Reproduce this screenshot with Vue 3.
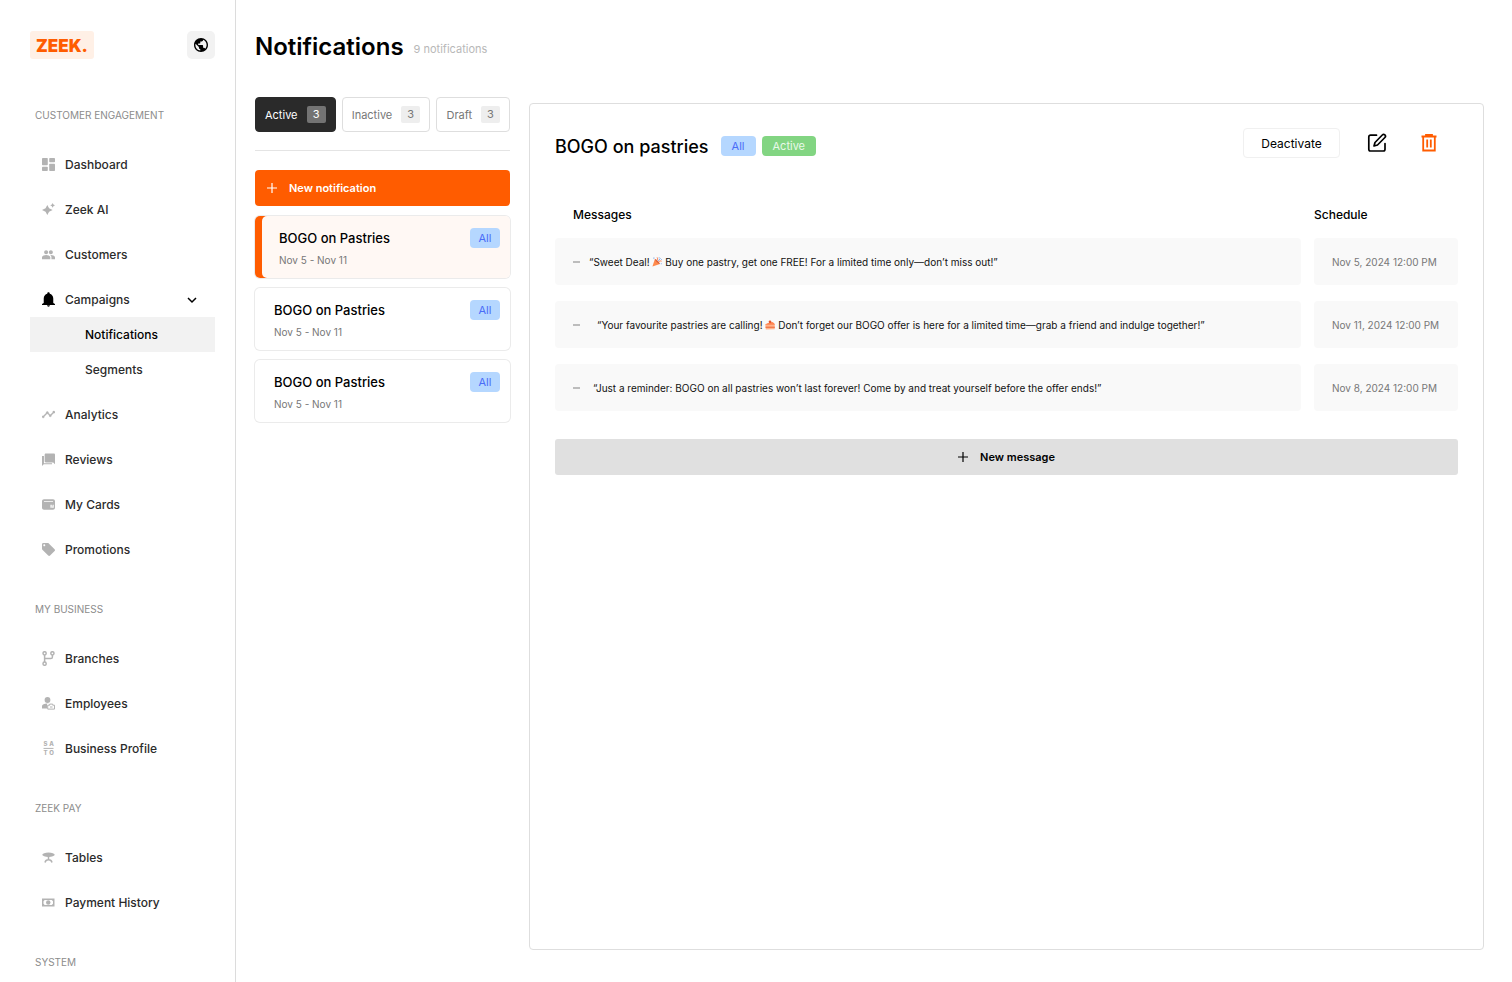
<script setup>
import { ref } from 'vue'

const icons = {
  dashboard: {
    box: '3 3 18 18',
    body: '<rect x="3" y="3" width="8" height="10" rx="1"/><rect x="13" y="3" width="8" height="6" rx="1"/><rect x="3" y="15" width="8" height="6" rx="1"/><rect x="13" y="11" width="8" height="10" rx="1"/>'
  },
  sparkle: {
    box: '1 1 22 22',
    body: '<path d="M10 4.500l3 5.500 6 3-6 3-3 5.500L7 16l-6-3 6-3z"/><path d="M19 1l1.300 2.700L23 5l-2.700 1.300L19 9l-1.300-2.700L15 5l2.700-1.300z"/>'
  },
  people: {
    box: '1 2 22 20',
    body: '<path d="M16 11.500c1.900 0 3.400-1.500 3.400-3.400S17.900 4.700 16 4.700s-3.400 1.500-3.400 3.400 1.500 3.400 3.400 3.400zm-8 0c1.900 0 3.400-1.500 3.400-3.400S9.900 4.700 8 4.700 4.600 6.200 4.600 8.100s1.500 3.400 3.400 3.400zm0 1.500c-2.330 0-7 1.170-7 3.500V20h14v-3.500c0-2.330-4.670-3.500-7-3.500zm8 0c-.29 0-.62.020-.97.050 1.160.84 1.970 1.970 1.970 3.450V20h6v-3.500c0-2.330-4.670-3.500-7-3.500z"/>'
  },
  bell: {
    box: '3 1 18 22',
    body: '<path d="M12 22.500c1.200 0 2.100-.8 2.100-1.900H9.900c0 1.100.9 1.900 2.100 1.900zM19 17v-6.500c0-3.500-2.200-6-5.200-6.800V3c0-1-.8-1.800-1.800-1.800S10.200 2 10.200 3v.7C7.200 4.500 5 7 5 10.500V17l-2.500 1.500V20h19v-1.500z"/>'
  },
  chart: {
    box: '1 2 22 20',
    body: '<path d="M23 8c0 1.100-.9 2-2 2-.18 0-.35-.020-.51-.07l-3.560 3.550c.050.16.070.34.070.52 0 1.100-.9 2-2 2s-2-.9-2-2c0-.18.020-.36.070-.52l-2.550-2.550c-.16.050-.34.070-.52.070s-.36-.020-.52-.07l-4.550 4.560c.050.16.070.33.070.51 0 1.100-.9 2-2 2s-2-.9-2-2 .9-2 2-2c.18 0 .35.020.51.070l4.560-4.550C8.020 9.360 8 9.180 8 9c0-1.100.9-2 2-2s2 .9 2 2c0 .18-.020.36-.07.520l2.550 2.550c.16-.050.34-.07.520-.07s.36.020.520.070l3.550-3.560C19.020 8.350 19 8.180 19 8c0-1.100.9-2 2-2s2 .9 2 2z" stroke="currentColor" stroke-width=".5"/>'
  },
  reviews: {
    box: '1 1 22 22',
    body: '<path d="M7.500 2H21c1.100 0 2 .9 2 2v16l-3-3H7.500c-1.100 0-2-.9-2-2V4c0-1.100.9-2 2-2z"/><path d="M1 6h3.300v12.200H18V20H4l-3 3z"/>'
  },
  card: {
    box: '2 3 20 18',
    body: '<path fill-rule="evenodd" d="M5 4h14c1.700 0 3 1.300 3 3v10c0 1.700-1.300 3-3 3H5c-1.700 0-3-1.300-3-3V7c0-1.700 1.300-3 3-3zm0 3v1.200h14V7zm10 5.500V17h2v-4.500zm3.500 0L17.500 17h2.500v-4.500z"/>'
  },
  tag: {
    box: '2 2 20 20',
    body: '<path d="M21.410 11.580l-9-9C12.050 2.220 11.550 2 11 2H4c-1.100 0-2 .9-2 2v7c0 .55.220 1.050.59 1.420l9 9c.36.36.86.58 1.410.58s1.050-.22 1.410-.59l7-7c.37-.36.59-.86.59-1.410s-.23-1.060-.59-1.420zM5.500 7C4.670 7 4 6.330 4 5.500S4.670 4 5.500 4 7 4.670 7 5.500 6.330 7 5.500 7z"/>'
  },
  branch: {
    box: '0 0 13 15',
    body: '<g fill="none" stroke="currentColor" stroke-width="1.500"><circle cx="2.600" cy="2.300" r="1.600"/><circle cx="10.400" cy="2.300" r="1.600"/><circle cx="2.600" cy="12.700" r="1.600"/><path d="M2.600 4v7M2.600 7.500h6.200c1 0 1.600-.6 1.600-1.600V4"/></g>'
  },
  employee: {
    box: '0 0 13 14',
    body: '<circle cx="5.500" cy="3.500" r="2.900"/><path d="M0 12V9.500C0 8 2.500 7 5 7c.8 0 1.500.1 2 .3H5v4.700z"/><path d="M5.700 8.700h2V7.600h3v1.100h1.800v3.900H5.700z" fill="none" stroke="currentColor" stroke-width="1"/><path d="M8 10.500h2.500" stroke="currentColor" stroke-width="1"/>'
  },
  profile: {
    box: '0 0 13 15',
    body: '<g font-family="Inter, sans-serif" font-size="6" font-weight="800" text-anchor="middle"><text x="3.500" y="5">S</text><text x="9.500" y="5">A</text><text x="3.500" y="14">T</text><text x="9.500" y="14">O</text></g><path d="M1.500 6.900h10v1h-10z"/>'
  },
  table: {
    box: '0 0 13 13',
    body: '<ellipse cx="6.500" cy="3.800" rx="6.200" ry="2.200"/><path d="M6.500 5v4M3 11.500c.5-2.100 1.800-2.700 3.500-2.700s3 .6 3.500 2.700" fill="none" stroke="currentColor" stroke-width="1.500"/>'
  },
  cash: {
    box: '0 0 13 13',
    body: '<path fill-rule="evenodd" d="M0 2.500h12.500v8H0zM2.700 4L1.500 5.200v2.600L2.700 9h7.100L11 7.800V5.200L9.800 4z"/><circle cx="6.250" cy="6.500" r="2.200"/>'
  }
}

const groups = [
  {
    title: 'CUSTOMER ENGAGEMENT',
    items: [
      { label: 'Dashboard', icon: 'dashboard' },
      { label: 'Zeek AI', icon: 'sparkle' },
      { label: 'Customers', icon: 'people' },
      { label: 'Campaigns', icon: 'bell', children: ['Notifications', 'Segments'] },
      { label: 'Analytics', icon: 'chart' },
      { label: 'Reviews', icon: 'reviews' },
      { label: 'My Cards', icon: 'card' },
      { label: 'Promotions', icon: 'tag' }
    ]
  },
  {
    title: 'MY BUSINESS',
    items: [
      { label: 'Branches', icon: 'branch' },
      { label: 'Employees', icon: 'employee' },
      { label: 'Business Profile', icon: 'profile' }
    ]
  },
  {
    title: 'ZEEK PAY',
    items: [
      { label: 'Tables', icon: 'table' },
      { label: 'Payment History', icon: 'cash' }
    ]
  },
  { title: 'SYSTEM', items: [] }
]

const tabs = [
  { label: 'Active', count: 3 },
  { label: 'Inactive', count: 3 },
  { label: 'Draft', count: 3 }
]
const activeTab = ref('Active')

const notifications = [
  { id: 1, name: 'BOGO on Pastries', dates: 'Nov 5 - Nov 11', audience: 'All' },
  { id: 2, name: 'BOGO on Pastries', dates: 'Nov 5 - Nov 11', audience: 'All' },
  { id: 3, name: 'BOGO on Pastries', dates: 'Nov 5 - Nov 11', audience: 'All' }
]
const selected = ref(1)

const messages = [
  {
    before: '“Sweet Deal! ',
    emoji: 'party',
    after: ' Buy one pastry, get one FREE! For a limited time only—don’t miss out!”',
    indent: 'none',
    schedule: 'Nov 5, 2024 12:00 PM'
  },
  {
    before: '“Your favourite pastries are calling! ',
    emoji: 'cake',
    after: ' Don’t forget our BOGO offer is here for a limited time—grab a friend and indulge together!”',
    indent: 'double',
    schedule: 'Nov 11, 2024 12:00 PM'
  },
  {
    before: '“Just a reminder: BOGO on all pastries won’t last forever! Come by and treat yourself before the offer ends!”',
    indent: 'single',
    schedule: 'Nov 8, 2024 12:00 PM'
  }
]
</script>

<template>
  <div class="page">
    <aside class="sidebar">
      <div class="brand">
        <a href="#" class="logo">ZEEK.</a>
        <button class="globe" aria-label="Language">
          <svg viewBox="2 2 20 20"><path d="M12 2C6.480 2 2 6.480 2 12s4.480 10 10 10 10-4.480 10-10S17.520 2 12 2zm-1 17.930c-3.950-.49-7-3.850-7-7.930 0-.62.080-1.210.21-1.790L9 15v1c0 1.100.9 2 2 2v1.930zm6.900-2.540c-.26-.81-1-1.390-1.900-1.390h-1v-3c0-.55-.45-1-1-1H8v-2h2c.55 0 1-.45 1-1V7h2c1.100 0 2-.9 2-2v-.41c2.930 1.190 5 4.060 5 7.410 0 2.080-.8 3.970-2.100 5.390z" /></svg>
        </button>
      </div>

      <nav>
        <section v-for="group in groups" :key="group.title" class="group">
          <h2>{{ group.title }}</h2>
          <ul v-if="group.items.length">
            <li v-for="item in group.items" :key="item.label">
              <a href="#" class="nav-link" :class="{ open: item.children }">
                <svg class="nav-icon" :viewBox="icons[item.icon].box" v-html="icons[item.icon].body"></svg>
                <span>{{ item.label }}</span>
                <svg v-if="item.children" class="chevron" viewBox="0 0 10 10"><path d="M1 3l4 4 4-4" /></svg>
              </a>
              <a
                v-for="child in item.children"
                :key="child"
                href="#"
                class="sub-link"
                :class="{ current: child === 'Notifications' }"
              >{{ child }}</a>
            </li>
          </ul>
        </section>
      </nav>
    </aside>

    <main>
      <header class="top">
        <h1>Notifications</h1>
        <span class="total">9 notifications</span>
      </header>

      <div class="columns">
        <section class="list">
          <div class="tabs">
            <button
              v-for="tab in tabs"
              :key="tab.label"
              class="tab"
              :class="{ active: activeTab === tab.label }"
              @click="activeTab = tab.label"
            >
              {{ tab.label }} <span class="count">{{ tab.count }}</span>
            </button>
          </div>

          <button class="new-notification">
            <svg class="plus" viewBox="0 0 10 10"><path d="M5 0v10M0 5h10" /></svg>
            New notification
          </button>

          <div class="cards">
            <button
              v-for="item in notifications"
              :key="item.id"
              class="card"
              :class="{ selected: selected === item.id }"
              @click="selected = item.id"
            >
              <span class="card-body">
                <span class="card-text">
                  <span class="card-name">{{ item.name }}</span>
                  <span class="card-dates">{{ item.dates }}</span>
                </span>
                <span class="badge">{{ item.audience }}</span>
              </span>
            </button>
          </div>
        </section>

        <section class="panel">
          <div class="panel-head">
            <div class="panel-title">
              <h2>BOGO on pastries</h2>
              <span class="badge large">All</span>
              <span class="badge large green">Active</span>
            </div>
            <div class="actions">
              <button class="deactivate">Deactivate</button>
              <button class="icon-button" aria-label="Edit">
                <svg viewBox="0 0 20 20" class="edit">
                  <path d="M9.500 2.200H3.500A1.700 1.700 0 0 0 1.800 3.900v12.400A1.700 1.700 0 0 0 3.500 18h12.800a1.700 1.700 0 0 0 1.700-1.700V10.500" />
                  <path d="M15.300 2a1.700 1.700 0 0 1 2.600 2.500L10.500 12 7 13l1-3.500z" />
                </svg>
              </button>
              <button class="icon-button" aria-label="Delete">
                <svg viewBox="0 0 20 20" class="trash">
                  <path d="M2.500 3.500h15M7 3V2h6v1M4.200 3.500v14h11.600v-14M8.200 6.500v8M11.800 6.500v8" />
                </svg>
              </button>
            </div>
          </div>

          <table>
            <thead>
              <tr>
                <th class="messages-head">Messages</th>
                <th>Schedule</th>
              </tr>
            </thead>
            <tbody>
              <tr v-for="message in messages" :key="message.schedule">
                <td class="message">
                  <span class="dash"></span>
                  <span class="message-text" :class="message.indent">{{ message.before }}<svg v-if="message.emoji === 'party'" class="emoji" viewBox="0 0 12 12" role="img" aria-label="Party popper">
                    <path d="M.5 11.500L3.500 2.500l6 6z" fill="#ff8a4c" />
                    <path d="M3.500 2.500c1.200-.3 6.200 4.500 6 6-1.200.5-6.200-4.200-6-6z" fill="#d9603a" />
                    <path d="M6 4c1-1 .8-2.300.2-3.500M8 6c.8-1.500 2-1.500 3.500-1" fill="none" stroke="#ff7b45" stroke-width="1.200" />
                    <path d="M7.500 4.500l2.700-3" stroke="#7fa9e8" stroke-width="1.200" />
                    <path d="M1.500.5H3V2H1.500zM10.500 7.500h1.300v1.300h-1.300zM10.800 2.500h1v1h-1zM8 .2h1.200v1.200H8z" fill="#8db4ea" />
                  </svg><svg v-else-if="message.emoji === 'cake'" class="emoji" viewBox="0 0 12 12" role="img" aria-label="Cake">
                    <path d="M.3 5L8.500 2.500 11.700 5v6L1 11.500z" fill="#ffb38d" />
                    <path d="M.2 5.800C2 4 6 3 8.500 2.500c1.500.3 3.300 2 3.300 3.300z" fill="#ff8551" />
                    <path d="M.6 8h11.200v1.400H.6z" fill="#f0703e" />
                    <circle cx="6" cy="2.200" r="1.600" fill="#e4572e" />
                  </svg>{{ message.after }}</span>
                </td>
                <td class="schedule">{{ message.schedule }}</td>
              </tr>
            </tbody>
          </table>

          <button class="new-message">
            <svg class="plus" viewBox="0 0 10 10"><path d="M5 0v10M0 5h10" /></svg>
            New message
          </button>
        </section>
      </div>
    </main>
  </div>
</template>

<style>
body {
  background: #fff;
}
</style>

<style scoped>
.page {
  display: flex;
  min-height: 100vh;
  box-sizing: border-box;
  font-family: Inter, "Liberation Sans", sans-serif;
  color: #000;
}

.page * {
  box-sizing: border-box;
}

h1,
h2,
ul {
  margin: 0;
  padding: 0;
}

ul {
  list-style: none;
}

a {
  color: inherit;
  text-decoration: none;
}

button {
  font-family: inherit;
  color: inherit;
  border: 0;
  padding: 0;
  background: none;
  cursor: pointer;
}

/* Sidebar */
.sidebar {
  flex: 0 0 236px;
  padding: 31px 20px 12px 30px;
  border-right: 1px solid #dcdcdc;
}

.brand {
  display: flex;
  justify-content: space-between;
  margin-bottom: 48px;
}

.logo {
  padding: 0 6px;
  border-radius: 3px;
  background: #fff0e6;
  color: #ff5c00;
  font-size: 17px;
  font-weight: 900;
  line-height: 30px;
  height: 28px;
}

.globe {
  display: flex;
  align-items: center;
  justify-content: center;
  width: 28px;
  height: 28px;
  border-radius: 5px;
  background: #f2f2f2;
}

.globe svg {
  width: 14px;
  height: 14px;
}

.group {
  margin-bottom: 34px;
}

.group:last-child {
  margin-bottom: 0;
}

.group h2 {
  padding-left: 5px;
  font-size: 10px;
  font-weight: 400;
  line-height: 16px;
  color: #8c8c8c;
}

.group ul {
  display: flex;
  flex-direction: column;
  gap: 10px;
  margin-top: 24px;
}

.nav-link {
  display: flex;
  align-items: center;
  gap: 10px;
  height: 35px;
  padding: 0 18px 0 12px;
  font-size: 12px;
  font-weight: 500;
  color: #2b2b2b;
}

.nav-icon {
  width: 13px;
  height: 15px;
  fill: currentColor;
  color: #b3b3b3;
}

.open .nav-icon {
  color: #000;
}

.chevron {
  width: 10px;
  height: 10px;
  margin-left: auto;
  fill: none;
  stroke: #000;
  stroke-width: 1.5;
}

.sub-link {
  display: block;
  padding-left: 55px;
  font-size: 12px;
  font-weight: 500;
  line-height: 35px;
  color: #2b2b2b;
}

.sub-link.current {
  background: #f2f2f2;
  color: #000;
}

/* Main area */
main {
  flex: 1;
  display: flex;
  flex-direction: column;
  min-width: 0;
  padding: 32px 28px 32px 19px;
}

.top {
  display: flex;
  align-items: flex-end;
  gap: 10px;
  margin-bottom: 35px;
}

h1 {
  font-size: 24px;
  font-weight: 600;
  line-height: 30px;
}

.total {
  font-size: 11px;
  line-height: 26px;
  color: #b8b8b8;
}

.columns {
  flex: 1;
  display: flex;
  gap: 19px;
}

.list {
  flex: 0 0 255px;
}

.tabs {
  display: flex;
  justify-content: space-between;
  padding-bottom: 18px;
  border-bottom: 1px solid #e4e4e4;
}

.tab {
  display: flex;
  align-items: center;
  gap: 9px;
  height: 35px;
  padding: 0 9px;
  border: 1px solid #dedede;
  border-radius: 4px;
  font-size: 11px;
  color: #777;
}

.count {
  width: 19px;
  border-radius: 2px;
  background: #eee;
  line-height: 17px;
  text-align: center;
}

.tab.active {
  background: #2a2a2a;
  border-color: #2a2a2a;
  color: #fff;
}

.tab.active .count {
  background: #737373;
}

.plus {
  width: 10px;
  height: 10px;
  stroke: currentColor;
  stroke-width: 1.2;
}

.new-notification {
  display: flex;
  align-items: center;
  gap: 12px;
  width: 100%;
  height: 36px;
  margin: 19px 0 10px;
  padding: 0 12px;
  border-radius: 4px;
  background: #ff5c00;
  color: #fff;
  font-size: 11px;
  font-weight: 600;
}

.cards {
  display: flex;
  flex-direction: column;
  gap: 10px;
}

.card {
  border-radius: 5px;
  box-shadow: 0 0 0 1px #ebebeb;
  text-align: left;
}

.card-body {
  display: flex;
  align-items: flex-start;
  justify-content: space-between;
  height: 62px;
  padding: 12px 10px 0 19px;
  border-radius: 5px;
}

.card.selected {
  padding-left: 7px;
  background: linear-gradient(to right, #ff5c00 20px, #fff8f4 20px);
}

.card.selected .card-body {
  padding-left: 17px;
  background: #fff8f4;
}

.card-text {
  display: flex;
  flex-direction: column;
  gap: 4px;
}

.card-name {
  font-size: 13px;
  font-weight: 500;
  line-height: 20px;
}

.card-dates {
  font-size: 10px;
  line-height: 16px;
  color: #777;
}

.badge {
  min-width: 30px;
  padding: 0 8px;
  border-radius: 4px;
  background: #b5d7ff;
  color: #4a6cf7;
  font-size: 11px;
  line-height: 20px;
  text-align: center;
}

.badge.large {
  min-width: 35px;
  padding: 0 11px;
}

.badge.green {
  margin-left: 6px;
  background: #82d582;
  color: #e9f9e9;
}

/* Detail panel */
.panel {
  flex: 1;
  min-width: 0;
  margin-top: 6px;
  padding: 24px 25px;
  border: 1px solid #dedede;
  border-radius: 4px;
}

.panel-head {
  display: flex;
  justify-content: space-between;
  margin-bottom: 43px;
}

.panel-title {
  display: flex;
  align-items: center;
  height: 36px;
}

.panel-title h2 {
  margin-right: 12px;
  font-size: 18px;
  font-weight: 500;
}

.actions {
  display: flex;
  align-items: center;
  height: 30px;
  padding-right: 19px;
  gap: 27px;
}

.deactivate {
  width: 97px;
  height: 30px;
  border: 1px solid #f0f0f0;
  border-radius: 4px;
  font-size: 12px;
}

.icon-button {
  display: flex;
  width: 20px;
  height: 20px;
}

.icon-button + .icon-button {
  margin-left: 5px;
}

.edit {
  fill: none;
  stroke: #000;
  stroke-width: 1.7;
  stroke-linecap: round;
  stroke-linejoin: round;
}

.trash {
  fill: none;
  stroke: #ff5c00;
  stroke-width: 1.8;
}

table,
tbody {
  display: flex;
  flex-direction: column;
}

tbody {
  gap: 16px;
  margin-top: 15px;
}

tr {
  display: grid;
  grid-template-columns: 1fr 144px;
  gap: 13px;
}

th {
  padding: 0;
  font-size: 12px;
  font-weight: 500;
  line-height: 16px;
  text-align: left;
}

.messages-head {
  padding-left: 18px;
}

td {
  display: flex;
  align-items: center;
  min-height: 47px;
  padding: 0 18px;
  border-radius: 4px;
  background: #f9f9f9;
  font-size: 10px;
}

.message {
  gap: 9px;
  color: #111;
}

.dash {
  width: 7px;
  height: 2px;
  background: #bdbdbd;
}

.message-text.single {
  padding-left: 4px;
}

.message-text.double {
  padding-left: 8px;
}

.emoji {
  width: 10px;
  height: 10px;
  vertical-align: -1px;
}

.schedule {
  color: #777;
}

.new-message {
  display: flex;
  align-items: center;
  justify-content: center;
  gap: 12px;
  width: 100%;
  height: 36px;
  margin-top: 28px;
  border-radius: 3px;
  background: #e0e0e0;
  font-size: 11px;
  font-weight: 600;
}
</style>
